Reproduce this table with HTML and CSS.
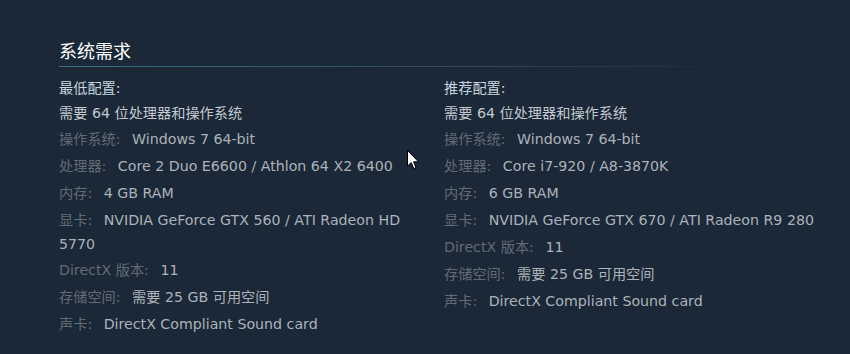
FILE: index.html
```html
<!DOCTYPE html>
<html lang="zh-CN">
<head>
<meta charset="utf-8">
<title>系统需求</title>
<link rel="stylesheet" href="styles.css">
</head>
<body>
<section class="sysreq">
  <h2 class="title">系统需求</h2>
  <div class="cols">
    <div class="col">
      <div class="col-head">最低配置:</div>
      <ul class="req-list">
        <li class="note">需要 64 位处理器和操作系统</li>
        <li><span class="label">操作系统:</span> Windows 7 64-bit</li>
        <li><span class="label">处理器:</span> Core 2 Duo E6600 / Athlon 64 X2 6400</li>
        <li><span class="label">内存:</span> 4 GB RAM</li>
        <li class="wrapped"><span class="label">显卡:</span> NVIDIA GeForce GTX 560 / ATI Radeon HD 5770</li>
        <li><span class="label">DirectX 版本:</span> 11</li>
        <li><span class="label">存储空间:</span> 需要 25 GB 可用空间</li>
        <li><span class="label">声卡:</span> DirectX Compliant Sound card</li>
      </ul>
    </div>
    <div class="col">
      <div class="col-head">推荐配置:</div>
      <ul class="req-list">
        <li class="note">需要 64 位处理器和操作系统</li>
        <li><span class="label">操作系统:</span> Windows 7 64-bit</li>
        <li><span class="label">处理器:</span> Core i7-920 / A8-3870K</li>
        <li><span class="label">内存:</span> 6 GB RAM</li>
        <li><span class="label">显卡:</span> NVIDIA GeForce GTX 670 / ATI Radeon R9 280</li>
        <li><span class="label">DirectX 版本:</span> 11</li>
        <li><span class="label">存储空间:</span> 需要 25 GB 可用空间</li>
        <li><span class="label">声卡:</span> DirectX Compliant Sound card</li>
      </ul>
    </div>
  </div>
  <svg class="cursor" width="13" height="20" viewBox="0 0 13 20" aria-hidden="true">
    <path d="M0.5 0.5 L0.5 16 L4.2 12.6 L6.8 18.6 L9 17.6 L6.5 11.8 L11.5 11.8 Z" fill="#ffffff" stroke="#000000" stroke-width="1" stroke-linejoin="round"/>
  </svg>
</section>
</body>
</html>
```

FILE: styles.css
```css
html, body {
  margin: 0;
  padding: 0;
  background: #1b2838;
}

body {
  width: 850px;
  height: 354px;
  overflow: hidden;
  font-family: "DejaVu Sans", "Noto Sans CJK SC", sans-serif;
  font-size: 14.2px;
  color: #acb2b8;
}

.sysreq {
  position: relative;
  padding: 38px 0 0 59px;
}

.title {
  margin: 0;
  width: 781px;
  font-family: "Noto Sans CJK SC", sans-serif;
  font-weight: normal;
  font-size: 18px;
  line-height: 24px;
  color: #ffffff;
  background: linear-gradient(to right, #3b6e8c 0%, rgba(59, 110, 140, 0.4) 60%, rgba(59, 110, 140, 0) 88%) left bottom / 100% 1px no-repeat;
  padding-bottom: 5px;
}

.cols {
  display: grid;
  grid-template-columns: 375px 375px;
  column-gap: 10px;
  margin-top: 9px;
}

.col-head {
  line-height: 24px;
  margin-bottom: 1px;
  color: #c6d4df;
}

.req-list {
  list-style: none;
  margin: 0;
  padding: 0;
}

.req-list li {
  line-height: 24px;
  margin-bottom: 3px;
}

.req-list li.note {
  margin-bottom: 2px;
  color: #c2c8ce;
}

.req-list li.wrapped {
  margin-bottom: 2px;
}

.label {
  color: #626b74;
  margin-right: 7px;
}

.cursor {
  position: absolute;
  left: 407px;
  top: 150px;
}
```
